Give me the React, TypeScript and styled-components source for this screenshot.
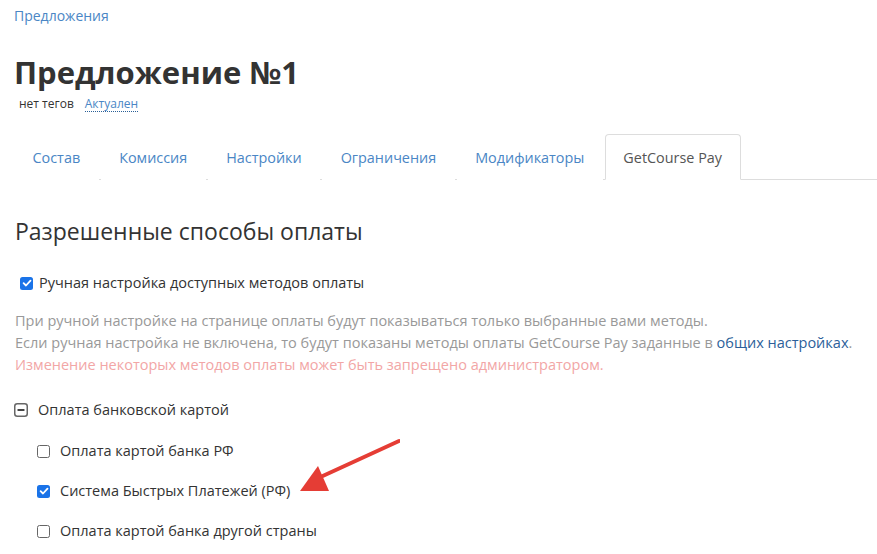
import React from 'react';
import styled, { createGlobalStyle } from 'styled-components';

const GlobalStyle = createGlobalStyle`
	* { box-sizing: border-box; }
	body {
		margin: 0;
		background: #ffffff;
		font-family: 'Open Sans', 'Noto Sans', sans-serif;
		color: #333333;
	}
`;

const tabs = ['Состав', 'Комиссия', 'Настройки', 'Ограничения', 'Модификаторы', 'GetCourse Pay'];

const methods = [
	{ label: 'Оплата картой банка РФ', checked: false },
	{ label: 'Система Быстрых Платежей (РФ)', checked: true },
	{ label: 'Оплата картой банка другой страны', checked: false }
];

function CheckBox({ checked }: { checked: boolean }) {
	return (
		<Box checked={checked}>
			{checked && (
				<svg width="10" height="10" viewBox="0 0 10 10">
					<path d="M1.6 5.2 L4 7.5 L8.5 2.6" fill="none" stroke="#fff" strokeWidth="1.8" strokeLinecap="round" strokeLinejoin="round" />
				</svg>
			)}
		</Box>
	);
}

export default function App() {
	return (
		<>
			<GlobalStyle />
			<Page>
				<Crumb href="#">Предложения</Crumb>
				<Title>Предложение №1</Title>
				<Meta>
					<span>нет тегов</span>
					<Status>Актуален</Status>
				</Meta>
				<Tabs>
					{tabs.map((t, i) => (
						<Tab key={t} active={i === tabs.length - 1}>
							{t}
						</Tab>
					))}
				</Tabs>

				<Section>
					<Heading>Разрешенные способы оплаты</Heading>
					<Option>
						<CheckBox checked />
						<span>Ручная настройка доступных методов оплаты</span>
					</Option>
					<Help>
						<HelpLine>При ручной настройке на странице оплаты будут показываться только выбранные вами методы.</HelpLine>
						<HelpLine>
							Если ручная настройка не включена, то будут показаны методы оплаты GetCourse Pay заданные в{' '}
							<HelpLink href="#">общих настройках</HelpLink>.
						</HelpLine>
						<HelpLine warn>Изменение некоторых методов оплаты может быть запрещено администратором.</HelpLine>
					</Help>

					<Group>
						<Collapse>
							<svg width="14" height="14" viewBox="0 0 14 14">
								<rect x="0.75" y="0.75" width="12.5" height="12.5" rx="2.5" fill="#fff" stroke="#666" strokeWidth="1.5" />
								<rect x="3.5" y="6" width="7" height="2" rx="0.5" fill="#444" />
							</svg>
						</Collapse>
						<span>Оплата банковской картой</span>
					</Group>
					<Methods>
						{methods.map(m => (
							<MethodRow key={m.label}>
								<CheckBox checked={m.checked} />
								<span>{m.label}</span>
							</MethodRow>
						))}
					</Methods>
				</Section>

				<Arrow width="120" height="70" viewBox="0 0 120 70">
					<line x1="119" y1="11" x2="34" y2="50" stroke="#e53d35" strokeWidth="4" strokeLinecap="round" />
					<polygon points="20,61 38,36 49,61" fill="#e53d35" />
				</Arrow>
			</Page>
		</>
	);
}

const Page = styled.div`
	position: relative;
	width: 877px;
	height: 554px;
	overflow: hidden;
	padding: 6px 0 0 14px;
`;

const Crumb = styled.a`
	display: block;
	font-size: 14px;
	line-height: 20px;
	color: #4a86c5;
	text-decoration: none;
`;

const Title = styled.h1`
	margin: 26px 0 0;
	font-size: 31px;
	line-height: 40px;
	font-weight: 700;
	color: #333;
`;

const Meta = styled.div`
	display: flex;
	align-items: center;
	gap: 11px;
	margin: 3px 0 0 5px;
	font-size: 12px;
	line-height: 18px;
	color: #333;
`;

const Status = styled.span`
	color: #4a86c5;
	border-bottom: 1px dotted #2a5f96;
	line-height: 15px;
`;

const Tabs = styled.div`
	display: flex;
	margin-top: 21px;
	height: 46px;
	border-bottom: 1px solid #dddddd;
`;

const Tab = styled.div<{ active?: boolean }>`
	display: flex;
	align-items: center;
	padding: 0 17.5px;
	margin-right: 2px;
	margin-bottom: -1px;
	font-size: 14.4px;
	color: ${({ active }) => (active ? '#555555' : '#4a86c5')};
	background: #fff;
	border: 1px solid ${({ active }) => (active ? '#dddddd' : 'transparent')};
	border-bottom-color: ${({ active }) => (active ? '#ffffff' : 'transparent')};
	border-radius: 4px 4px 0 0;
`;

const Section = styled.div`
	padding-left: 1px;
`;

const Heading = styled.h2`
	margin: 36px 0 0;
	font-size: 23px;
	line-height: 30px;
	font-weight: 400;
	color: #333;
`;

const Option = styled.label`
	display: flex;
	align-items: center;
	gap: 6px;
	margin: 27px 0 0 5px;
	font-size: 14.5px;
	line-height: 20px;
	color: #333;
`;

const Box = styled.span<{ checked: boolean }>`
	display: inline-flex;
	align-items: center;
	justify-content: center;
	width: 13px;
	height: 13px;
	border-radius: 2.5px;
	background: ${({ checked }) => (checked ? '#1a73e8' : '#fff')};
	border: ${({ checked }) => (checked ? 'none' : '1.5px solid #666')};
	flex-shrink: 0;
`;

const Help = styled.div`
	margin-top: 17px;
	font-size: 14.5px;
	line-height: 22px;
	color: #999999;
`;

const HelpLine = styled.div<{ warn?: boolean }>`
	color: ${({ warn }) => (warn ? '#f2a6a6' : '#999999')};
	white-space: nowrap;
`;

const HelpLink = styled.a`
	color: #2c5f9a;
	text-decoration: none;
`;

const Group = styled.div`
	display: flex;
	align-items: center;
	gap: 10px;
	margin: 24px 0 0 -1px;
	font-size: 14.5px;
	line-height: 20px;
	color: #333;
`;

const Collapse = styled.span`
	display: inline-flex;
	svg {
		display: block;
	}
`;

const Methods = styled.div`
	display: flex;
	flex-direction: column;
	gap: 20px;
	margin: 21px 0 0 22px;
`;

const MethodRow = styled.label`
	display: flex;
	align-items: center;
	gap: 10px;
	font-size: 14.5px;
	line-height: 20px;
	color: #333;
`;

const Arrow = styled.svg`
	position: absolute;
	left: 280px;
	top: 430px;
`;
